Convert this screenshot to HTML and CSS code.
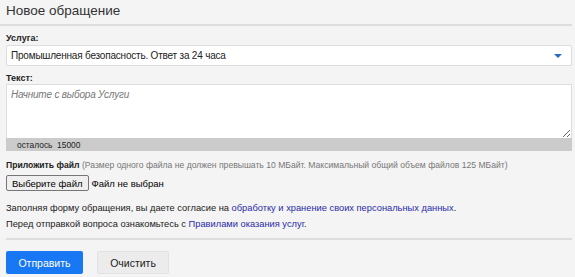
FILE: index.html
```html
<!DOCTYPE html>
<html lang="ru">
<head>
    <meta charset="UTF-8">
    <meta name="viewport" content="width=device-width, initial-scale=1.0">
    <title>Новое обращение</title>
    <link rel="stylesheet" href="styles.css">
</head>
<body>
    <form class="ticket-form">
        <h1 class="ticket-title">Новое обращение</h1>

        <div class="field field-first">
            <label class="field-label" for="service">Услуга:</label>
            <div class="select-box">
                <select id="service">
                    <option>Промышленная безопасность. Ответ за 24 часа</option>
                </select>
                <span class="select-arrow"></span>
            </div>
        </div>

        <div class="field">
            <label class="field-label" for="text">Текст:</label>
            <textarea id="text" placeholder="Начните с выбора Услуги"></textarea>
            <div class="counter">осталось&nbsp; 15000</div>
        </div>

        <div class="field field-file">
            <div class="file-label"><b>Приложить файл</b> <span class="file-note">(Размер одного файла не должен превышать 10 МБайт. Максимальный общий объем файлов 125 МБайт)</span></div>
            <div class="file-row">
                <button type="button" class="file-btn">Выберите файл</button>
                <span class="file-name">Файл не выбран</span>
            </div>
        </div>

        <div class="agree">
            <p>Заполняя форму обращения, вы даете согласие на <a href="#">обработку и хранение своих персональных данных</a>.</p>
            <p>Перед отправкой вопроса ознакомьтесь с <a href="#">Правилами оказания услуг</a>.</p>
        </div>

        <div class="actions">
            <button type="button" class="btn btn-primary">Отправить</button>
            <button type="button" class="btn btn-default">Очистить</button>
        </div>
    </form>
</body>
</html>
```

FILE: styles.css
```css
/* базовые настройки */
html, body {
    margin: 0;
    background: #f4f4f4;
}
body {
    font-family: "Liberation Sans", Arial, sans-serif;
    font-size: 10px;
    color: #222;
}
p {margin: 0}

.ticket-form {
    width: 566px;
    padding-left: 6px;
}

/* заголовок */
.ticket-title {
    margin: 0 0 0 -6px;
    padding: 3px 0 5px 6px;
    font-size: 13.5px;
    line-height: 16px;
    font-weight: normal;
    color: #333;
    border-bottom: 2px solid #ddd;
}

/* поля формы */
.field {
    display: flex;
    flex-direction: column;
}
.field-label {
    font-size: 9px;
    line-height: 11px;
    font-weight: bold;
    color: #222;
    margin: 7px 0 0;
}
.field-first .field-label {
    margin: 7px 0 1px;
}

.select-box {
    position: relative;
}
.select-box select {
    display: block;
    width: 100%;
    height: 21px;
    font-family: inherit;
    font-size: 10px;
    letter-spacing: -0.2px;
    color: #222;
    background: #fff;
    border: 1px solid #ddd;
    border-radius: 2px;
    padding: 0 4px;
    appearance: none;
    -webkit-appearance: none;
}
.select-arrow {
    position: absolute;
    right: 10px;
    top: 9px;
    width: 0;
    height: 0;
    border-left: 4px solid transparent;
    border-right: 4px solid transparent;
    border-top: 4px solid #2a6cc0;
}

textarea {
    display: block;
    height: 54px;
    box-sizing: border-box;
    font-family: inherit;
    font-size: 10px;
    letter-spacing: -0.2px;
    border: 1px solid #ddd;
    border-bottom: 0;
    padding: 4px 4px;
    background: #fff;
    resize: vertical;
    margin: 0;
}
textarea::placeholder {
    color: #777;
    font-style: italic;
}
.counter {
    background: #cbcbcb;
    height: 13px;
    line-height: 14px;
    font-size: 8.4px;
    padding-left: 11px;
    color: #222;
}

/* загрузка файла */
.field-file {
    margin-top: 9px;
}
.file-label {
    font-size: 8.6px;
    line-height: 11px;
    color: #222;
}
.file-note {
    color: #777;
}
.file-row {
    display: flex;
    align-items: center;
    gap: 3px;
    margin-top: 4px;
}
.file-btn {
    font-family: inherit;
    font-size: 9.5px;
    height: 16px;
    padding: 0 5px;
    background: #efefef;
    border: 1px solid #767676;
    border-radius: 2px;
    color: #000;
}
.file-name {
    font-size: 9.5px;
    color: #000;
}

/* согласие */
.agree {
    margin-top: 9px;
    padding-bottom: 6px;
    border-bottom: 2px solid #ddd;
    line-height: 16px;
    font-size: 9.3px;
}
.agree a {
    color: #2b2ba8;
    text-decoration: none;
}

/* кнопки */
.actions {
    display: flex;
    gap: 14px;
    padding-top: 11px;
}
.btn {
    font-family: inherit;
    font-size: 10.5px;
    height: 23px;
    border-radius: 2px;
    border: 0;
    cursor: pointer;
}
.btn-primary {
    width: 77px;
    background: #1877f2;
    color: #fff;
}
.btn-default {
    width: 72px;
    background: #ececec;
    color: #222;
    border: 1px solid #e2e2e2;
}
```
